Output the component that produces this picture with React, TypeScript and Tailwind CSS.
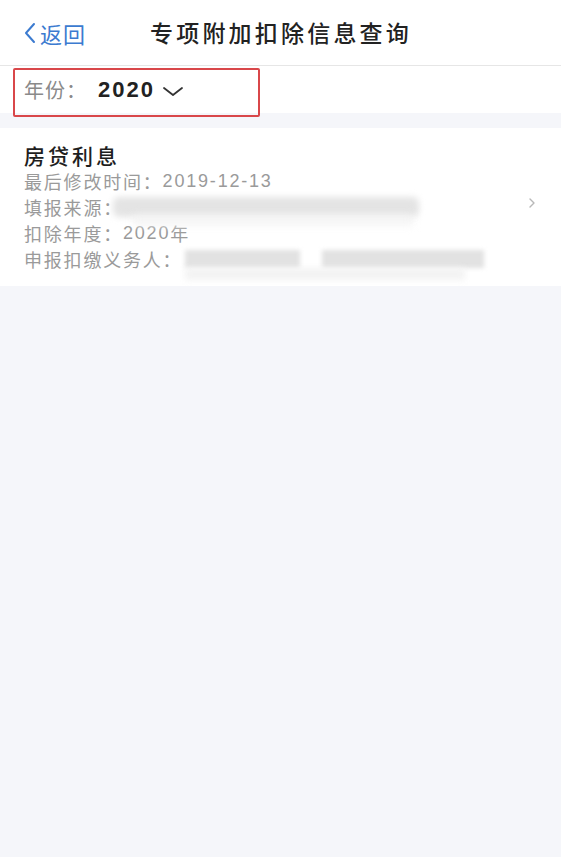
import React from "react";

export default function App() {
  return (
    <div className="min-h-[857px] w-full bg-[#f5f6fa] font-['Noto_Sans_CJK_SC','Noto_Sans',sans-serif]">
      {/* Header */}
      <div className="flex h-[66px] items-center border-b border-[#e6e6e6] bg-white pl-[23px]">
        <div className="flex items-center text-[#3c7bd0]">
          <svg width="14" height="22" viewBox="0 0 14 22" className="mr-[3px]">
            <path d="M11 2 L3 11 L11 20" fill="none" stroke="currentColor" strokeWidth="2" strokeLinecap="round" strokeLinejoin="round" />
          </svg>
          <span className="text-[22px] leading-none tracking-[1px]">返回</span>
        </div>
        <div className="ml-[64px] text-[23px] font-medium leading-none tracking-[3.2px] text-[#222]">专项附加扣除信息查询</div>
      </div>

      {/* Year row */}
      <div className="relative flex h-[47px] items-center bg-white pl-[24px]">
        <span className="text-[20px] tracking-[1px] text-[#8a8a8a]">年份：</span>
        <span className="ml-[11px] font-['Liberation_Sans',sans-serif] text-[22px] font-bold tracking-[2px] text-[#222]">2020</span>
        <svg width="22" height="12" viewBox="0 0 22 12" className="ml-[7px] mt-[2px]">
          <path d="M2 3 L11 10 L20 3" fill="none" stroke="#333" strokeWidth="1.8" strokeLinecap="round" strokeLinejoin="round" />
        </svg>
        <div className="pointer-events-none absolute left-[13px] top-[2px] h-[49px] w-[247px] rounded-[2px] border-2 border-[#d9474a]" />
      </div>

      <div className="h-[15px]" />

      {/* Card */}
      <div className="flex items-center bg-white pb-[14px] pl-[24px] pr-[25px] pt-[13px]">
        <div className="flex-1">
          <div className="text-[21px] font-medium leading-[28px] tracking-[3px] text-[#1e1e1e]">房贷利息</div>
          <div className="-mt-[1px] flex flex-col text-[18px] leading-[26px] tracking-[1.8px] text-[#9a9a9a]">
            <div className="flex h-[26px] items-center">
              <span>最后修改时间：</span>
              <span className="font-['Liberation_Sans',sans-serif] text-[18px] tracking-[1.8px]">2019-12-13</span>
            </div>
            <div className="flex h-[26px] items-center">
              <span>填报来源：</span>
              <div className="relative -ml-[10px] h-[20px] w-[306px]">
                <div className="absolute inset-0 rounded-[6px] bg-[#e4e4e4] blur-[3px]" />
                <div className="absolute left-[20px] top-[18px] h-[10px] w-[280px] bg-[#f3f3f3] blur-[4px]" />
              </div>
            </div>
            <div className="flex h-[26px] items-center">
              <span>扣除年度：</span>
              <span className="font-['Liberation_Sans',sans-serif] text-[18px] tracking-[1.8px]">2020</span>
              <span>年</span>
            </div>
            <div className="flex h-[26px] items-center">
              <span>申报扣缴义务人：</span>
              <div className="relative ml-[3px] h-[18px] w-[300px]">
                <div className="absolute left-0 top-0 h-[18px] w-[115px] bg-[#e2e2e2] blur-[2px]" />
                <div className="absolute left-[137px] top-0 h-[18px] w-[162px] bg-[#e2e2e2] blur-[2px]" />
                <div className="absolute left-0 top-[18px] h-[12px] w-[280px] bg-[#f3f3f3] blur-[3px]" />
              </div>
            </div>
          </div>
        </div>
        <svg width="8" height="12" viewBox="0 0 8 12" className="-mt-[8px]">
          <path d="M2 2 L6 6 L2 10" fill="none" stroke="#b8b8b8" strokeWidth="1.4" strokeLinecap="round" strokeLinejoin="round" />
        </svg>
      </div>
    </div>
  );
}
